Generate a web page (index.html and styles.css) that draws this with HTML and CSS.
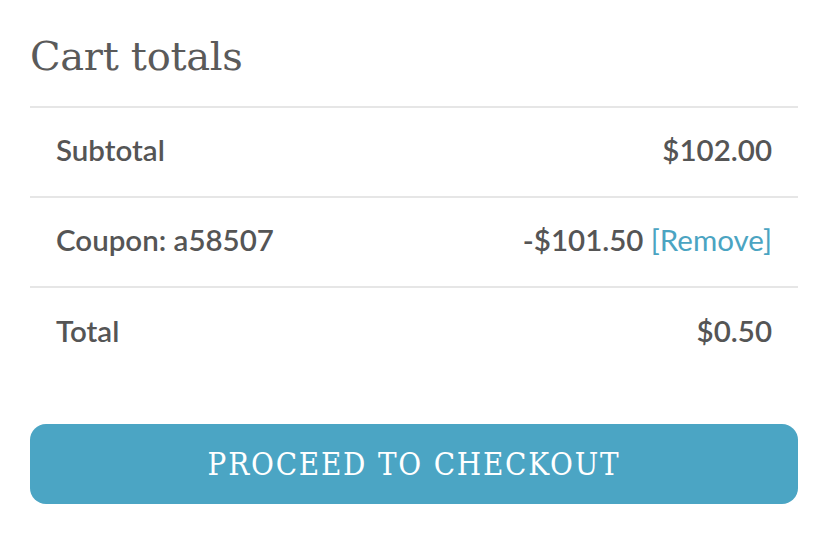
FILE: index.html
```html
<!DOCTYPE html>
<html>
<head>
<meta charset="utf-8">
<link rel="stylesheet" href="styles.css">
</head>
<body>
<div class="cart">
  <h2 class="title">Cart totals</h2>
  <div class="rows">
    <div class="row"><span>Subtotal</span><span>$102.00</span></div>
    <div class="row"><span>Coupon: a58507</span><span>-$101.50 <a class="remove">[Remove]</a></span></div>
    <div class="row last"><span>Total</span><span>$0.50</span></div>
  </div>
  <a class="checkout">PROCEED TO CHECKOUT</a>
</div>
</body>
</html>
```
FILE: styles.css
```css
html, body { margin: 0; padding: 0; background: #fff; }
.cart {
  padding: 30px 34px 0 30px;
  font-family: "Source Sans Pro", Lato, "Open Sans", sans-serif;
  color: #555;
}
.title {
  margin: 0;
  font-family: "DejaVu Serif", "Liberation Serif", serif;
  font-weight: 300;
  font-size: 40px;
  line-height: 52px;
  height: 76px;
  color: #5a5a5a;
  letter-spacing: -0.3px;
}
.rows { border-top: 2px solid #e6e6e6; }
.row {
  display: flex;
  justify-content: space-between;
  align-items: center;
  padding: 0 26px 6px;
  box-sizing: border-box;
  height: 90px;
  border-bottom: 2px solid #e6e6e6;
  font-size: 29.5px;
  font-weight: 600;
}
.row.last { border-bottom: none; }
.remove { color: #4ba4c2; font-weight: 400; }
.checkout {
  display: flex;
  justify-content: center;
  align-items: center;
  margin-top: 46px;
  height: 80px;
  border-radius: 16px;
  background: #4ba5c4;
  color: #fff;
  font-family: "DejaVu Serif Condensed", "DejaVu Serif", serif;
  font-size: 31px;
  letter-spacing: 1.8px;
}
```
